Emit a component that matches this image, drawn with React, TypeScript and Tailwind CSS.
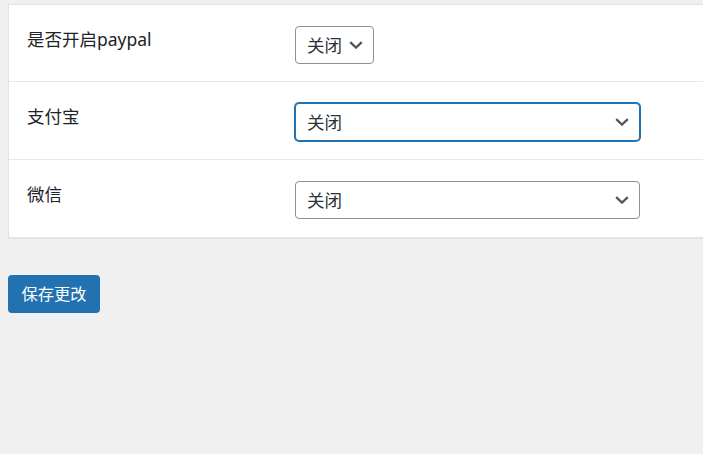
import React from "react";

const Chevron = () => (
  <svg width="14" height="8" viewBox="0 0 14 8" fill="none" className="shrink-0">
    <path d="M1.2 1.2L7 6.6L12.8 1.2" stroke="#50575e" strokeWidth="2.3" strokeLinecap="butt" strokeLinejoin="miter" />
  </svg>
);

function Select({ wide, focused }: { wide?: boolean; focused?: boolean }) {
  return (
    <div
      className={
        "flex h-[38px] items-center justify-between rounded-[4px] border bg-white pl-[11px] pr-[10px] text-[17.5px] leading-none text-[#2c3338] " +
        (wide ? "w-[345px] " : "w-[79px] ") +
        (focused ? "border-[#2271b1] shadow-[0_0_0_1px_#2271b1]" : "border-[#8c8f94]")
      }
    >
      <span className="pt-[1px]">关闭</span>
      <Chevron />
    </div>
  );
}

function Row({ label, h, border, children }: { label: string; h: string; border?: boolean; children: React.ReactNode }) {
  return (
    <div className={"flex items-start " + h + (border ? " border-b border-[#e8e8e9]" : "")}>
      <div className="w-[286px] shrink-0 pl-[18px] pt-[23px] text-[17.5px] leading-[23px] text-[#1d2327]">{label}</div>
      <div className="pt-[21px]">{children}</div>
    </div>
  );
}

export default function App() {
  return (
    <div
      className="h-[454px] w-[703px] overflow-hidden bg-[#f0f0f1] pl-2 pt-[4px]"
      style={{ fontFamily: '"Noto Sans", "Noto Sans CJK SC", sans-serif' }}
    >
      <div className="w-[720px] border border-[#e1e2e4] bg-white shadow-[0_1px_1px_rgba(0,0,0,0.04)]">
        <Row label="是否开启paypal" h="h-[77px]" border>
          <Select />
        </Row>
        <Row label="支付宝" h="h-[78px]" border>
          <Select wide focused />
        </Row>
        <Row label="微信" h="h-[77px]">
          <Select wide />
        </Row>
      </div>
      <div className="mt-[37px]">
        <button className="flex h-[38px] w-[92px] items-center justify-center rounded-[4px] bg-[#2271b1] text-[16.25px] leading-none text-white">
          保存更改
        </button>
      </div>
    </div>
  );
}
